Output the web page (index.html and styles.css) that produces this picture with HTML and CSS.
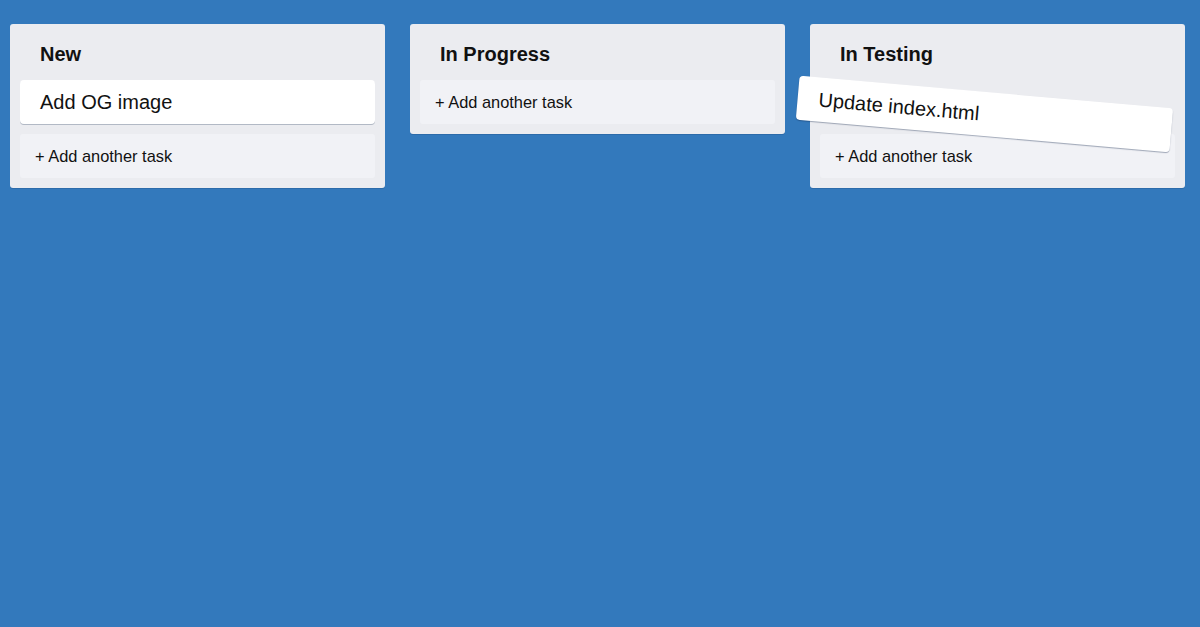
FILE: index.html
```html
<!DOCTYPE html>
<html>
<head>
<meta charset="utf-8">
<link rel="stylesheet" href="styles.css">
</head>
<body>
<div class="board">
  <section class="column">
    <h2 class="column-title">New</h2>
    <div class="card">Add OG image</div>
    <div class="add-task">+ Add another task</div>
  </section>
  <section class="column">
    <h2 class="column-title">In Progress</h2>
    <div class="add-task">+ Add another task</div>
  </section>
  <section class="column">
    <h2 class="column-title">In Testing</h2>
    <div class="placeholder"></div>
    <div class="add-task">+ Add another task</div>
  </section>
</div>
<div class="card dragging">Update index.html</div>
</body>
</html>
```
FILE: styles.css
```css
html, body {
  margin: 0;
  padding: 0;
}
body {
  background: #3379bc;
  font-family: "Liberation Sans", Arial, sans-serif;
  color: #111;
  width: 1200px;
  height: 627px;
  overflow: hidden;
  position: relative;
}
.board {
  display: flex;
  align-items: flex-start;
  gap: 25px;
  padding: 24px 10px;
}
.column {
  width: 375px;
  box-sizing: border-box;
  background: #ebecf0;
  border-radius: 3px;
  padding: 0 10px 10px;
  box-shadow: 0 1px 0 rgba(9, 30, 66, 0.15);
}
.column-title {
  margin: 0;
  height: 56px;
  box-sizing: border-box;
  padding: 4px 0 0 20px;
  line-height: 52px;
  font-size: 20px;
  font-weight: bold;
  color: #111;
}
.card {
  background: #fff;
  height: 44px;
  line-height: 44px;
  padding: 0 20px;
  border-radius: 4px;
  box-shadow: 0 1px 0 rgba(9, 30, 66, 0.25);
  font-size: 20px;
  margin-bottom: 10px;
}
.placeholder {
  height: 44px;
  margin-bottom: 10px;
}
.add-task {
  background: #f1f2f6;
  height: 44px;
  line-height: 44px;
  padding: 0 15px;
  border-radius: 3px;
  font-size: 16.4px;
}
.dragging {
  position: absolute;
  left: 797px;
  top: 92px;
  width: 375px;
  box-sizing: border-box;
  margin: 0;
  padding: 0 21px;
  font-size: 20px;
  transform: rotate(5deg);
  box-shadow: 0 1px 1px rgba(9, 30, 66, 0.35);
}
```
